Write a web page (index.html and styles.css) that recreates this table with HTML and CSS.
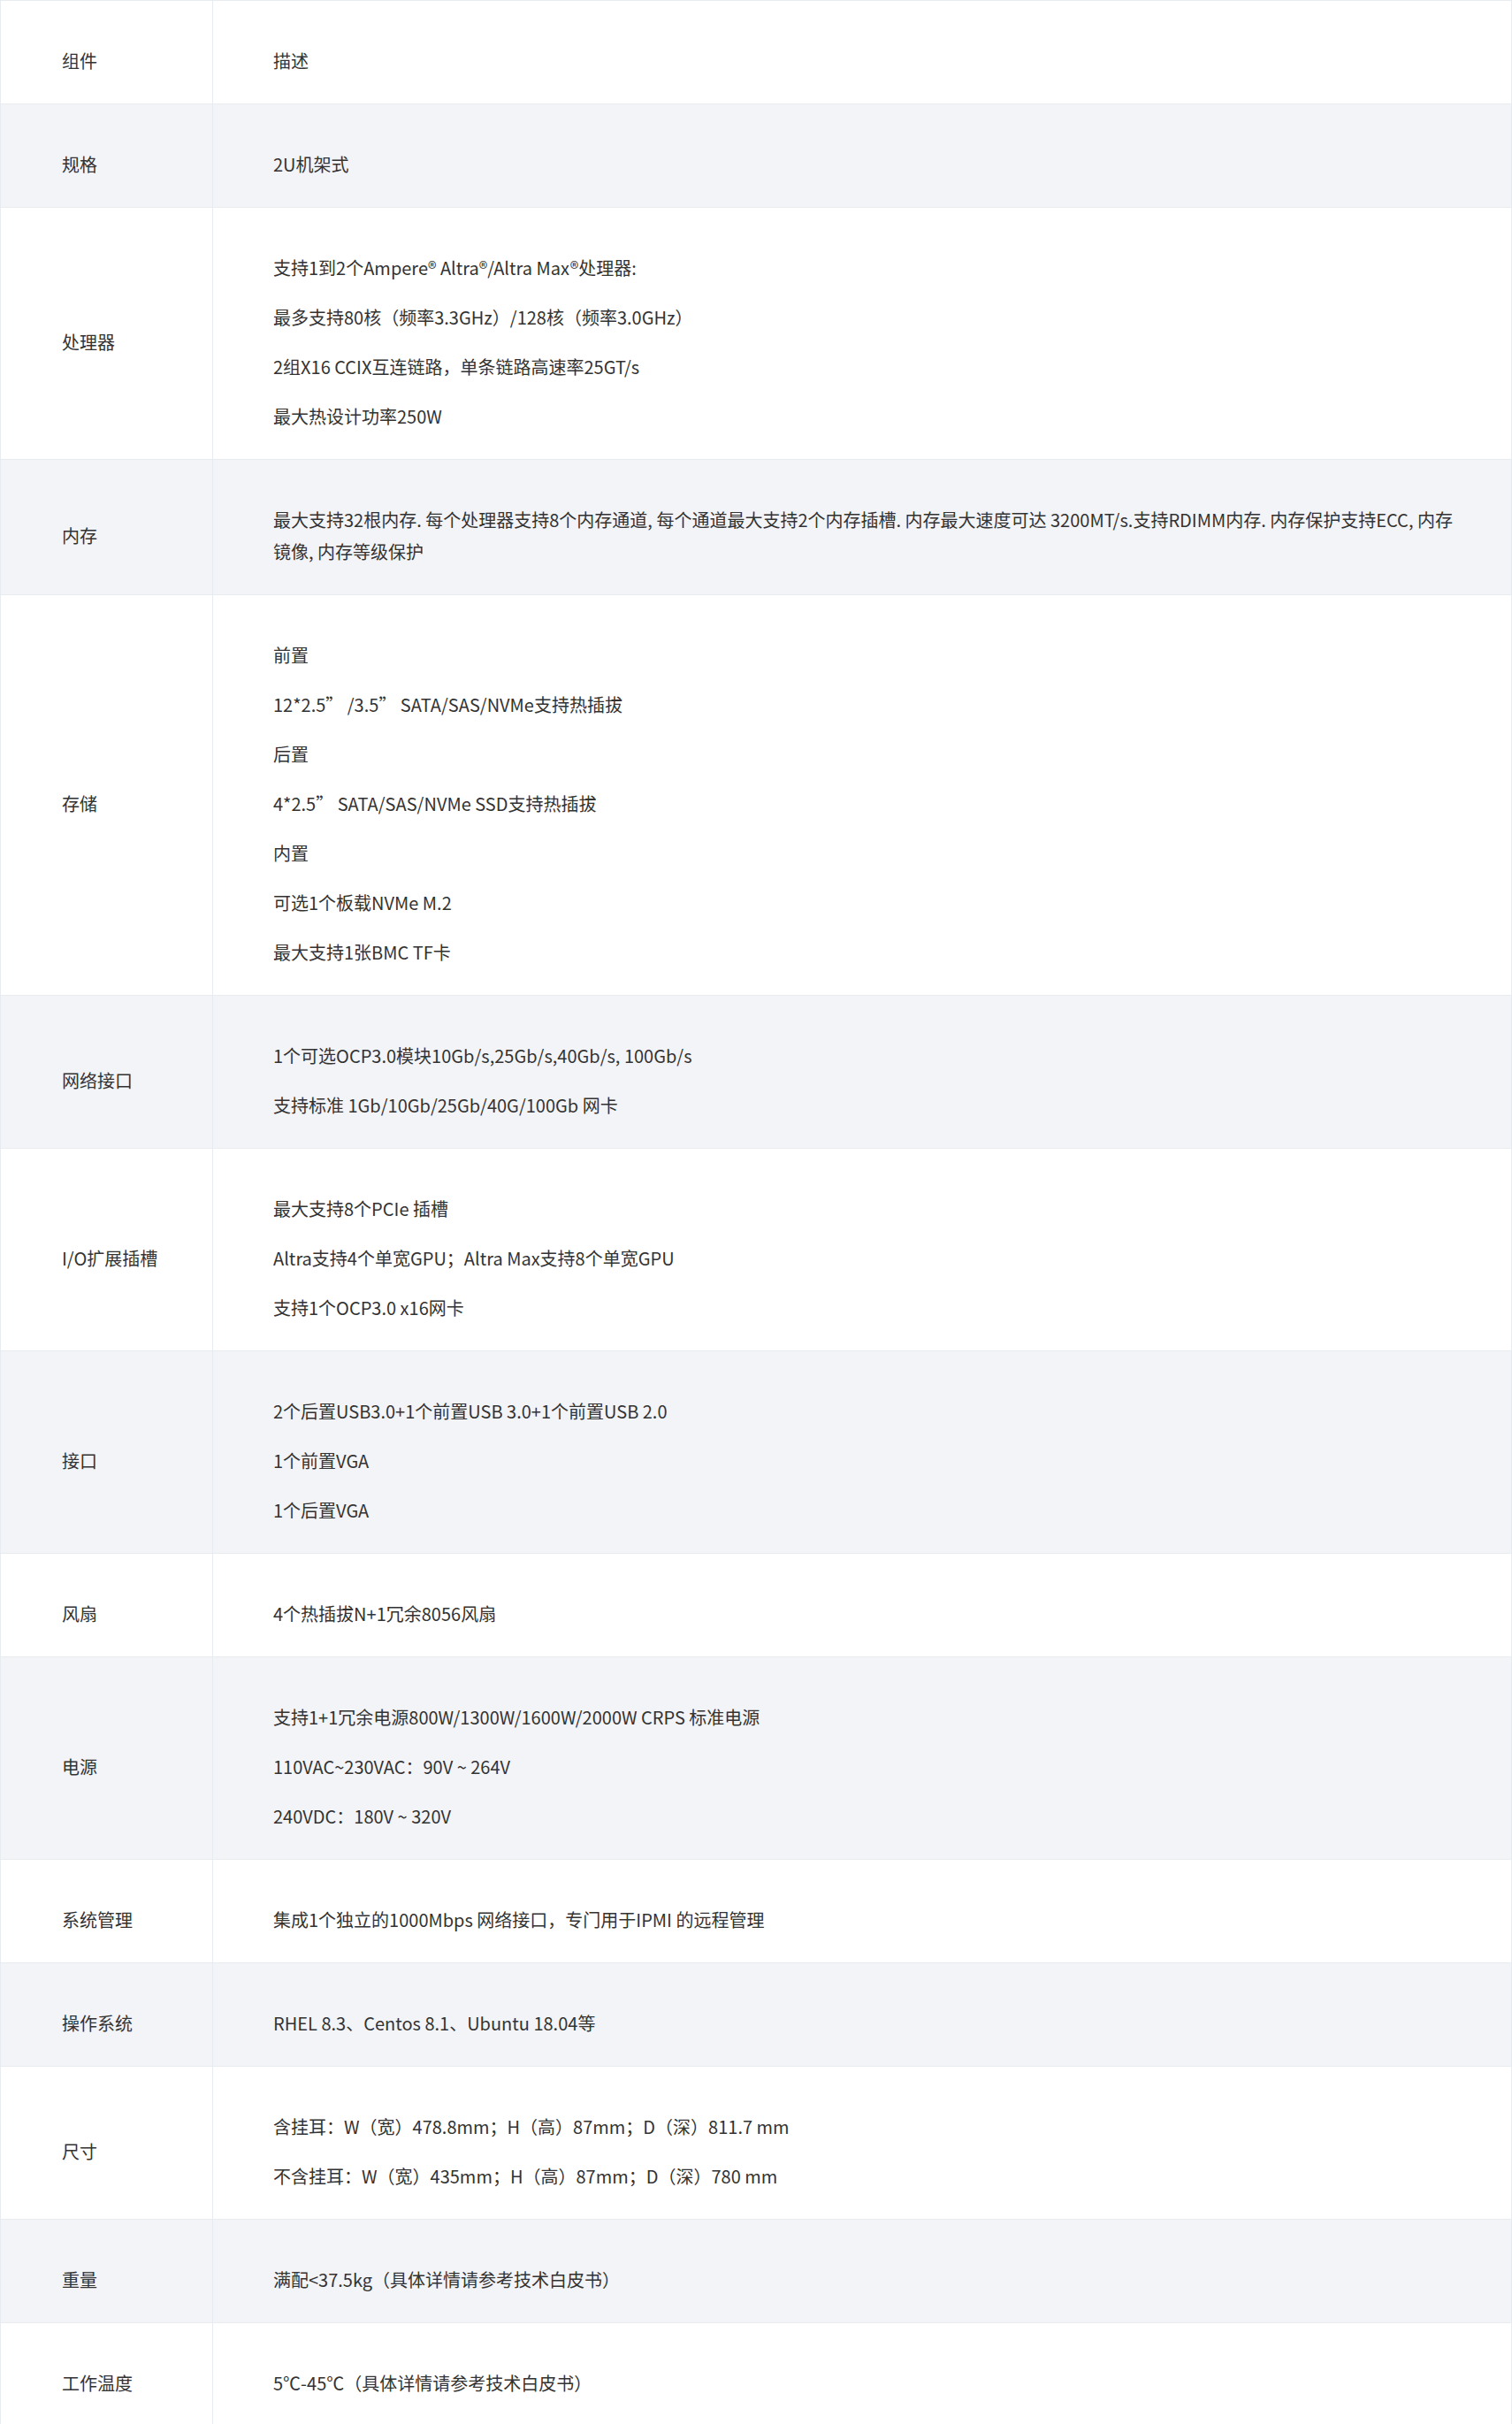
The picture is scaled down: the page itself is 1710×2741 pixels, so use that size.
FILE: index.html
```html
<!DOCTYPE html>
<html lang="zh-CN">
<head>
    <meta charset="UTF-8">
    <title>产品规格</title>
    <link rel="stylesheet" href="styles.css">
</head>
<body>
<table class="spec">
    <tr>
        <td class="name">组件</td>
        <td class="desc"><p>描述</p></td>
    </tr>
    <tr>
        <td class="name">规格</td>
        <td class="desc"><p>2U机架式</p></td>
    </tr>
    <tr>
        <td class="name">处理器</td>
        <td class="desc">
            <p>支持1到2个Ampere® Altra®/Altra Max®处理器:</p>
            <p>最多支持80核（频率3.3GHz）/128核（频率3.0GHz）</p>
            <p>2组X16 CCIX互连链路，单条链路高速率25GT/s</p>
            <p>最大热设计功率250W</p>
        </td>
    </tr>
    <tr>
        <td class="name">内存</td>
        <td class="desc"><p>最大支持32根内存. 每个处理器支持8个内存通道, 每个通道最大支持2个内存插槽. 内存最大速度可达 3200MT/s.支持RDIMM内存. 内存保护支持ECC, 内存镜像, 内存等级保护</p></td>
    </tr>
    <tr>
        <td class="name">存储</td>
        <td class="desc">
            <p>前置</p>
            <p>12*2.5”&nbsp;/3.5”&nbsp;SATA/SAS/NVMe支持热插拔</p>
            <p>后置</p>
            <p>4*2.5”&nbsp;SATA/SAS/NVMe SSD支持热插拔</p>
            <p>内置</p>
            <p>可选1个板载NVMe M.2</p>
            <p>最大支持1张BMC TF卡</p>
        </td>
    </tr>
    <tr>
        <td class="name">网络接口</td>
        <td class="desc">
            <p>1个可选OCP3.0模块10Gb/s,25Gb/s,40Gb/s, 100Gb/s</p>
            <p>支持标准 1Gb/10Gb/25Gb/40G/100Gb 网卡</p>
        </td>
    </tr>
    <tr>
        <td class="name">I/O扩展插槽</td>
        <td class="desc">
            <p>最大支持8个PCIe 插槽</p>
            <p>Altra支持4个单宽GPU；Altra Max支持8个单宽GPU</p>
            <p>支持1个OCP3.0 x16网卡</p>
        </td>
    </tr>
    <tr>
        <td class="name">接口</td>
        <td class="desc">
            <p>2个后置USB3.0+1个前置USB 3.0+1个前置USB 2.0</p>
            <p>1个前置VGA</p>
            <p>1个后置VGA</p>
        </td>
    </tr>
    <tr>
        <td class="name">风扇</td>
        <td class="desc"><p>4个热插拔N+1冗余8056风扇</p></td>
    </tr>
    <tr>
        <td class="name">电源</td>
        <td class="desc">
            <p>支持1+1冗余电源800W/1300W/1600W/2000W CRPS 标准电源</p>
            <p>110VAC~230VAC：90V ~ 264V</p>
            <p>240VDC：180V ~ 320V</p>
        </td>
    </tr>
    <tr>
        <td class="name">系统管理</td>
        <td class="desc"><p>集成1个独立的1000Mbps 网络接口，专门用于IPMI 的远程管理</p></td>
    </tr>
    <tr>
        <td class="name">操作系统</td>
        <td class="desc"><p>RHEL 8.3、Centos 8.1、Ubuntu 18.04等</p></td>
    </tr>
    <tr>
        <td class="name">尺寸</td>
        <td class="desc">
            <p>含挂耳：W（宽）478.8mm；H（高）87mm；D（深）811.7 mm</p>
            <p>不含挂耳：W（宽）435mm；H（高）87mm；D（深）780 mm</p>
        </td>
    </tr>
    <tr>
        <td class="name">重量</td>
        <td class="desc"><p>满配&lt;37.5kg（具体详情请参考技术白皮书）</p></td>
    </tr>
    <tr>
        <td class="name">工作温度</td>
        <td class="desc"><p>5℃-45℃（具体详情请参考技术白皮书）</p></td>
    </tr>
</table>
</body>
</html>
```

FILE: styles.css
```css
* {
    margin: 0;
    padding: 0
}

body {
    background-color: #fff;
    font-family: "Noto Sans CJK SC", "Noto Sans", sans-serif;
    font-size: 20px;
    color: #333;
}

.spec {
    width: 100%;
    border-collapse: collapse;
    line-height: 36px;
}

.spec td {
    border: 1px solid #e8ebf0;
    vertical-align: middle;
    padding: 30px 56px 10px 68px;
}

.spec td.name {
    width: 114px;
    padding-left: 69px;
}

.spec tr:nth-child(even) td {
    background-color: #f3f4f8;
}

.spec p {
    margin: 20px 0;
}
```
